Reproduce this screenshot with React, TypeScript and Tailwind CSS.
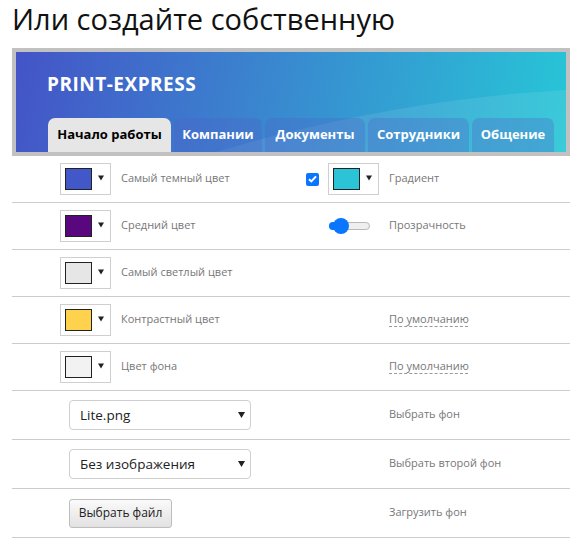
import React from "react";

const Tri = ({ w = 7, h = 6 }: { w?: number; h?: number }) => (
  <svg width={w} height={h} viewBox="0 0 7 6" className="block">
    <path d="M0 0 H7 L3.5 6 Z" fill="#222" />
  </svg>
);

const Picker = ({ color }: { color: string }) => (
  <div className="flex h-[32px] w-[51px] items-start border border-[#cfcfcf] bg-white">
    <div className="ml-[4px] mt-[4px] h-[22px] w-[27px] border border-[#222]" style={{ background: color }} />
    <div className="ml-[6px] mt-[11px]">
      <Tri w={6} h={6} />
    </div>
  </div>
);

const Label = ({ children }: { children: React.ReactNode }) => (
  <span className="block text-[11px] leading-[14px] text-[#777] -translate-y-[1px]">{children}</span>
);

const Dashed = ({ children }: { children: React.ReactNode }) => (
  <span className="block text-[11px] leading-[14px] text-[#777] underline decoration-dashed decoration-[#999] underline-offset-[3px] -translate-y-[1px]">{children}</span>
);

const Check = () => (
  <div className="flex h-[13px] w-[13px] items-center justify-center rounded-[2px] bg-[#0a75ff]">
    <svg width="9" height="8" viewBox="0 0 9 8">
      <path d="M1 4.2 L3.4 6.4 L8 1.4" stroke="white" strokeWidth="2" fill="none" />
    </svg>
  </div>
);

const Slider = () => (
  <div className="relative h-[16px] w-[41px]">
    <div className="absolute left-0 top-[4px] h-[8px] w-[41px] rounded-full border border-[#b9b9b9] bg-[#efefef]" />
    <div className="absolute left-0 top-[4px] h-[8px] w-[14px] rounded-l-full bg-[#0a75ff]" />
    <div className="absolute left-[4px] top-0 h-[16px] w-[16px] rounded-full bg-[#0a75ff]" />
  </div>
);

const ColorRow = ({
  color,
  label,
  right,
}: {
  color: string;
  label: string;
  right?: React.ReactNode;
}) => (
  <div className="flex h-[47px] items-center border-b border-[#cccccc]">
    <div className="flex w-[294px] items-center pl-[48px]">
      <Picker color={color} />
      <div className="ml-[10px]">
        <Label>{label}</Label>
      </div>
    </div>
    {right}
  </div>
);

const Select = ({ text }: { text: string }) => (
  <div className="flex h-[30px] w-[182px] items-center justify-between rounded-[4px] border border-[#cfcfcf] bg-white pl-[10px] pr-[5px]">
    <span className="text-[13.5px] text-[#222]">{text}</span>
    <Tri w={7} h={6} />
  </div>
);

const BottomRow = ({ control, label }: { control: React.ReactNode; label: string }) => (
  <div className="flex h-[49px] items-center border-b border-[#cccccc]">
    <div className="w-[377px] pl-[57px]">{control}</div>
    <Label>{label}</Label>
  </div>
);

export default function App() {
  return (
    <div className="w-[584px] bg-white pl-[12px] pr-[14px]" style={{ fontFamily: '"Open Sans", "Noto Sans", sans-serif' }}>
      <h1 className="h-[48px] text-[29px] leading-[38px] text-[#111]">Или создайте собственную</h1>
      <div className="border-[4px] border-[#c1c1c1]">
        <div className="relative h-[100px] overflow-hidden bg-[linear-gradient(100deg,#4454c7_0%,#3a86cf_45%,#27c6d7_100%)]">
          <svg className="absolute inset-0" width="550" height="100" viewBox="0 0 550 100">
            <path d="M200 100 C300 70 420 45 550 38 L550 100 Z" fill="white" fillOpacity="0.09" />
          </svg>
          <div className="relative flex h-full flex-col pl-[31px]">
            <div className="mt-[20px] text-[19px] font-bold leading-[24px] tracking-[0.5px] text-white">PRINT-EXPRESS</div>
            <div className="mt-auto flex gap-[3px] pl-[1px]">
              <div className="flex h-[34px] w-[123px] items-center justify-center rounded-t-[7px] bg-[#e6e6e6] text-[13px] font-bold text-black">
                Начало работы
              </div>
              {[
                ["Компании", "w-[88px]"],
                ["Документы", "w-[100px]"],
                ["Сотрудники", "w-[101px]"],
                ["Общение", "w-[82px]"],
              ].map(([t, w]) => (
                <div
                  key={t}
                  className={`flex h-[34px] items-center justify-center rounded-t-[7px] bg-[rgba(80,95,200,0.3)] text-[13px] font-bold text-white ${w}`}
                >
                  {t}
                </div>
              ))}
            </div>
          </div>
        </div>
      </div>
      <ColorRow
        color="#4258c8"
        label="Самый темный цвет"
        right={
          <div className="flex items-center">
            <div className="w-[22px]">
              <Check />
            </div>
            <Picker color="#2bc4d6" />
            <div className="ml-[10px]">
              <Label>Градиент</Label>
            </div>
          </div>
        }
      />
      <ColorRow
        color="#58077f"
        label="Средний цвет"
        right={
          <div className="flex items-center pl-[23px]">
            <Slider />
            <div className="ml-[19px]">
              <Label>Прозрачность</Label>
            </div>
          </div>
        }
      />
      <ColorRow color="#e6e6e6" label="Самый светлый цвет" />
      <ColorRow
        color="#ffd24d"
        label="Контрастный цвет"
        right={
          <div className="pl-[83px]">
            <Dashed>По умолчанию</Dashed>
          </div>
        }
      />
      <ColorRow
        color="#f2f2f2"
        label="Цвет фона"
        right={
          <div className="pl-[83px]">
            <Dashed>По умолчанию</Dashed>
          </div>
        }
      />
      <BottomRow control={<Select text="Lite.png" />} label="Выбрать фон" />
      <BottomRow control={<Select text="Без изображения" />} label="Выбрать второй фон" />
      <BottomRow
        control={
          <div className="flex h-[29px] w-[103px] items-center justify-center rounded-[3px] border border-[#bdbdbd] bg-[linear-gradient(#fafafa,#e2e2e2)] text-[12px] text-[#222]">
            Выбрать файл
          </div>
        }
        label="Загрузить фон"
      />
    </div>
  );
}
